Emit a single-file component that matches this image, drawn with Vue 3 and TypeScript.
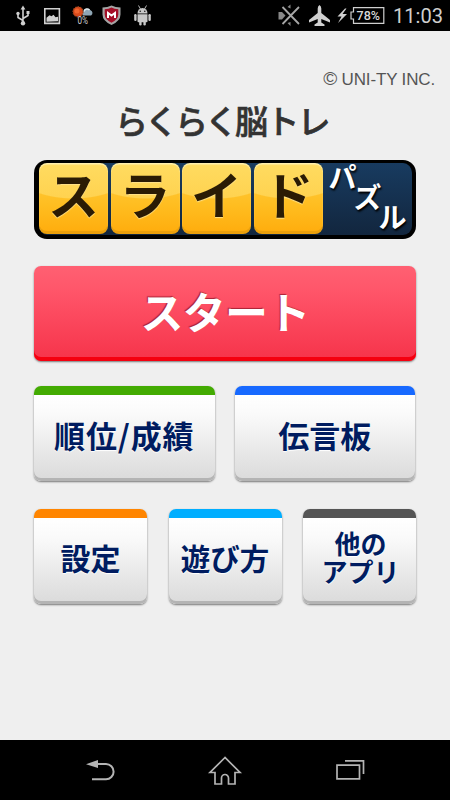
<script setup lang="ts">
interface MenuItem {
  id: string
  label: string
}

const tiles: string[] = ['ス', 'ラ', 'イ', 'ド']
const puzzle: string[] = ['パ', 'ズ', 'ル']

const primary: MenuItem[] = [
  { id: 'ranking', label: '順位/成績' },
  { id: 'board', label: '伝言板' },
]

const secondary: MenuItem[] = [
  { id: 'settings', label: '設定' },
  { id: 'howto', label: '遊び方' },
  { id: 'others', label: '他の\nアプリ' },
]
</script>

<template>
  <div class="screen">
    <header class="status">
      <svg class="status-icons" width="160" height="31" viewBox="0 0 160 31">
        <g fill="none" stroke="#d0d0d0" stroke-width="1.6">
          <path d="M23 8V23M23 20.500l-5-3v-4M23 18.500l5-3v-3" />
          <path d="M44.800 8.800h14.600v14.600h-14.600z" />
        </g>
        <g fill="#d0d0d0">
          <path d="M23 5.500l2.400 4h-4.800z" />
          <circle cx="23" cy="23.300" r="2.200" />
          <circle cx="18" cy="13.500" r="1.700" />
          <path d="M26.500 11h3v3h-3z" />
          <path d="M46.500 21.800v-4l3-2.500 2 1 2-1.500 2 2.500 2.500-.5v4.500z" />
        </g>
        <path d="M83 15.500a3 3 0 0 1 .8-4.800a4.200 4.200 0 0 1 6.800-.5a3 3 0 0 1 .5 5.300z" fill="#8fa6b5" />
        <path d="M84 11.500a3.200 3.200 0 0 1 5.500-1.500" stroke="#dce6eb" stroke-width="1.500" fill="none" />
        <circle cx="78" cy="11.800" r="5" fill="#d94a1b" stroke="#9c4520" stroke-width="1.200" stroke-dasharray="1.500 1" />
        <circle cx="77" cy="11" r="2.500" fill="#f0642e" />
        <text class="rain" x="77.500" y="23.500" textLength="10.500" lengthAdjust="spacingAndGlyphs">0%</text>
        <path d="M102.500 7.500q5 0 9-2q4 2 9 2v7q0 6.500-9 10.500q-9-4-9-10.500z" fill="#a5a5a5" />
        <path d="M104.700 9.300q4 0 6.800-1.700q2.800 1.700 6.800 1.700v5q0 5-6.800 8.500q-6.800-3.500-6.800-8.500z" fill="#a30f27" />
        <path d="M108 18v-5l3.500 2.500 3.500-2.500v5" fill="none" stroke="#fff" stroke-width="2" />
        <g fill="#c8c8c8">
          <path d="M137.500 13.500a5 5.500 0 0 1 10 0z" />
          <path d="M137.500 14.300h10v7a1 1 0 0 1-1 1h-8a1 1 0 0 1-1-1z" />
          <rect x="134.200" y="14" width="2.400" height="7" rx="1.200" />
          <rect x="148.400" y="14" width="2.400" height="7" rx="1.200" />
          <rect x="139.200" y="19" width="2.400" height="6.500" rx="1.200" />
          <rect x="143.400" y="19" width="2.400" height="6.500" rx="1.200" />
        </g>
        <path d="M138.500 5.500l2 3.500M146.500 5.500l-2 3.500" stroke="#c8c8c8" stroke-width=".9" />
        <g fill="#000"><circle cx="140.200" cy="11.300" r=".7" /><circle cx="144.800" cy="11.300" r=".7" /></g>
      </svg>
      <svg class="status-icons" width="180" height="31" viewBox="270 0 180 31">
        <path d="M278.500 12h3.500l3.500 3.500-3.500 4h-3.500zM287.500 7l3-2.500v4zM287.500 23l3 3v-4z" fill="#888" />
        <path d="M282.500 7l16.500 17M299 7l-16.500 17" stroke="#a6a6a6" stroke-width="1.800" />
        <path d="M319.500 5q1.800 1 1.800 3.500v4.500l8.700 7v2.500l-8.700-3.500v3.500l3.200 2v1.500h-10v-1.500l3.200-2v-3.500l-8.700 3.500v-2.500l8.700-7v-4.500q0-2.500 1.800-3.500z" fill="#d0d0d0" />
        <path d="M345 8.500l-7.500 8h4l-3.500 6.500 9-9h-4.500l4-5.500z" fill="#d0d0d0" />
        <path d="M353.500 7.700h30.300v15.600h-30.300v-4.300h-2.500v-7h2.500z" fill="none" stroke="#d0d0d0" stroke-width="1.200" />
        <text class="battery" x="356.500" y="20" textLength="23.500" lengthAdjust="spacingAndGlyphs">78%</text>
        <text class="clock" x="393" y="23" textLength="50" lengthAdjust="spacingAndGlyphs">11:03</text>
      </svg>
    </header>

    <main class="content">
      <p class="copyright"><span class="mark">©</span> UNI-TY INC.</p>
      <h1 class="title">らくらく<span class="wide">脳トレ</span></h1>

      <div class="logo">
        <div class="tiles">
          <span v-for="tile in tiles" :key="tile" class="tile">{{ tile }}</span>
        </div>
        <div class="puzzle">
          <span v-for="char in puzzle" :key="char" class="puzzle-char">{{ char }}</span>
        </div>
      </div>

      <button class="start" type="button">スタート</button>

      <nav class="row primary">
        <button v-for="item in primary" :key="item.id" type="button" class="card" :class="item.id">{{ item.label }}</button>
      </nav>
      <nav class="row secondary">
        <button v-for="item in secondary" :key="item.id" type="button" class="card" :class="item.id">{{ item.label }}</button>
      </nav>
    </main>

    <footer class="navbar">
      <svg class="status-icons" width="450" height="60" viewBox="0 740 450 60" fill="none" stroke="#b4b4b4" stroke-width="2">
        <path d="M92 779.300h14a7.600 7.600 0 0 0 0-15.200h-10" />
        <path d="M86 764.200l12-4.200v8z" fill="#b4b4b4" stroke="none" />
        <path d="M225 757.500l-15 15h5v11.500h6.500v-6a3.500 3.500 0 0 1 7 0v6h6.500v-11.500h5z" stroke-width="1.700" />
        <path d="M337 765.200h22.500v13.600h-22.500z" stroke-width="1.700" />
        <path d="M345 760.800h18.500v13.200" stroke-width="1.700" />
      </svg>
    </footer>
  </div>
</template>

<style>
body {
  margin: 0;
  background: #000;
}
</style>

<style scoped>
.screen {
  box-sizing: border-box;
  display: flex;
  flex-direction: column;
  width: 450px;
  height: 800px;
  overflow: hidden;
  background: #efefef;
  font-family: "Noto Sans CJK JP", sans-serif;
}
.status {
  display: flex;
  flex: none;
  justify-content: space-between;
  height: 31px;
  background: #000;
}
.navbar {
  flex: none;
  height: 60px;
  background: #000;
}
.status-icons {
  display: block;
}
.rain {
  font: 11px Roboto, sans-serif;
  fill: #ccc;
}
.battery {
  font: 500 12.500px Roboto, sans-serif;
  fill: #d8d8d8;
}
.clock {
  font: 20px Roboto, sans-serif;
  fill: #cfcfcf;
}
.content {
  flex: 1;
  min-height: 0;
  padding: 38px 34px 0;
}
.copyright {
  margin: 0 -19px 0 0;
  height: 20px;
  line-height: 20px;
  text-align: right;
  font-family: "Liberation Sans", Arial, sans-serif;
  font-size: 17px;
  letter-spacing: -0.150px;
  color: #555;
}
.mark {
  font-size: 19px;
}
.title {
  margin: 7px 0 0;
  padding-left: 81px;
  height: 48px;
  line-height: 48px;
  font-size: 33px;
  font-weight: 500;
  letter-spacing: -3px;
  white-space: nowrap;
  color: #333;
  -webkit-text-stroke: 0.600px #333;
}
.title .wide {
  letter-spacing: -1.800px;
}
.logo {
  box-sizing: border-box;
  display: flex;
  width: 382px;
  height: 79px;
  margin-top: 16px;
  padding: 3px 4px 4px 5px;
  border-radius: 13px;
  background: linear-gradient(#183b60, #12263e) content-box, #000;
}
.tiles {
  display: flex;
  gap: 2.500px;
}
.tile {
  width: 69px;
  height: 71px;
  border-radius: 8px;
  text-align: center;
  line-height: 60px;
  font-size: 51px;
  font-weight: 700;
  color: #2b1b04;
  text-shadow: 0 1px 1px #ffe28a;
  background:
    radial-gradient(ellipse 66px 36px at 50% 0, rgba(255, 232, 130, 0.450) 97%, transparent 100%),
    linear-gradient(#ffd145, #ffbd20 60%, #ffac0c);
  box-shadow: inset 0 1.500px 1px #fff0b0, inset 0 -3px 0 #eba00c;
}
.puzzle {
  display: grid;
  grid-template-columns: repeat(3, 25px);
  grid-template-rows: repeat(3, 20px);
  margin: 0 0 0 6px;
}
.puzzle-char {
  line-height: 27px;
  font-size: 28px;
  font-weight: 700;
  color: #fff;
  text-shadow: 1px 2px 2px #000;
}
.puzzle-char:nth-child(1) {
  grid-area: 1 / 1;
}
.puzzle-char:nth-child(2) {
  grid-area: 2 / 2;
}
.puzzle-char:nth-child(3) {
  grid-area: 3 / 3;
}
.start {
  display: block;
  width: 382px;
  height: 95px;
  margin: 27px 0 0;
  padding: 0 0 6px;
  border: 0;
  border-radius: 7px;
  background: linear-gradient(#ff6072, #ff566a 25%, #f6334a);
  box-shadow: inset 0 -4px 0 #f5000f, 0 1px 2px #777;
  font: 700 43px/89px "Noto Sans CJK JP", sans-serif;
  letter-spacing: -0.800px;
  color: #fff;
  text-shadow: -1px -1px 1px #a82336;
}
.row {
  display: flex;
}
.primary {
  gap: 20px;
  margin-top: 25px;
}
.secondary {
  gap: 21.500px;
  margin-top: 28px;
}
.card {
  box-sizing: border-box;
  flex: none;
  height: 95px;
  padding: 7px 0 6px;
  border: 0;
  border-radius: 7px;
  background:
    linear-gradient(var(--accent), var(--accent)) 0 0 / 100% 9px no-repeat,
    linear-gradient(#fff 9px, #fafafa 30%, #dadada);
  box-shadow: inset 0 -3px 0 #b4b4b4, 0 1px 2px #777;
  font-family: "Noto Sans CJK JP", sans-serif;
  font-weight: 700;
  line-height: 27px;
  color: #001c60;
  text-shadow: 0 1px 1px #fff;
  text-align: center;
  white-space: pre;
}
.primary .card {
  width: 180.500px;
  font-size: 31px;
}
.primary .ranking {
  letter-spacing: 0.900px;
}
.secondary .card {
  width: 113px;
  font-size: 30px;
}
.secondary .howto {
  font-size: 29.500px;
}
.secondary .others {
  padding-left: 2px;
  font-size: 26px;
  line-height: 28px;
}
.ranking {
  --accent: #43ab02;
}
.board {
  --accent: #1769ff;
}
.settings {
  --accent: #ff8500;
}
.howto {
  --accent: #00aeff;
}
.others {
  --accent: #555;
}
</style>
